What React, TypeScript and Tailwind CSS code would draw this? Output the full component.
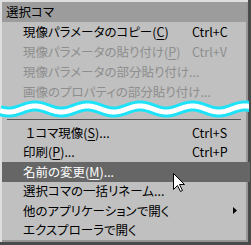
import React from 'react';

const font = { fontFamily: '"Noto Sans CJK JP", "Noto Sans", sans-serif', fontFeatureSettings: '"palt"' };

interface Item {
  label: React.ReactNode;
  shortcut?: string;
  disabled?: boolean;
  active?: boolean;
  submenu?: boolean;
}

const U = ({ c }: { c: string }) => <u className="underline underline-offset-2">{c}</u>;

const topItems: Item[] = [
  { label: <>現像パラメータのコピー(<U c="C" />)</>, shortcut: 'Ctrl+C' },
  { label: <>現像パラメータの貼り付け(<U c="P" />)</>, shortcut: 'Ctrl+V', disabled: true },
  { label: '現像パラメータの部分貼り付け...', disabled: true },
  { label: '画像のプロパティの部分貼り付け...', disabled: true },
];

const bottomItems: Item[] = [
  { label: <>&nbsp;１コマ現像(<U c="S" />)...</>, shortcut: 'Ctrl+S' },
  { label: <>印刷(<U c="P" />)...</>, shortcut: 'Ctrl+P' },
  { label: <>名前の変更(<U c="M" />)...</>, active: true },
  { label: '選択コマの一括リネーム...' },
  { label: '他のアプリケーションで開く', submenu: true },
  { label: 'エクスプローラで開く' },
];

function Row({ item, h }: { item: Item; h: string }) {
  const color = item.active
    ? 'bg-[#666666] text-white -mr-[4px]'
    : item.disabled
      ? 'text-[#8e8e8e]'
      : 'text-black';
  return (
    <div className={`relative flex items-center pl-[21px] text-[12.5px] leading-none ${h} ${color}`}>
      <span className="w-[169px] shrink-0 whitespace-nowrap">{item.label}</span>
      {item.shortcut && <span className="whitespace-nowrap">{item.shortcut}</span>}
      {item.submenu && (
        <svg width="4" height="7" viewBox="0 0 4 7" className="ml-[41px]">
          <path d="M0 0 L4 3.5 L0 7 Z" fill="#000" />
        </svg>
      )}
    </div>
  );
}

function wavePath() {
  const pts: string[] = [];
  for (let x = -2; x <= 251; x++) {
    const y = 11 - 3 * Math.cos((2 * Math.PI * (x - 33)) / 52.5);
    pts.push(`${x},${y.toFixed(2)}`);
  }
  return 'M' + pts.join(' L');
}

export default function App() {
  const d = wavePath();
  return (
    <div className="w-[251px] h-[245px] overflow-hidden bg-[#4a4a4a]" style={font}>
      <div className="relative h-[242px] w-[248px] border-l-2 border-t-2 border-[#dedede] bg-[#c0c0c0]">
        <div className="flex h-full flex-col border-r-2 border-b-2 border-[#969696]">
          <div className="flex h-[20px] items-center bg-[#9c9c9c] pl-[4px] text-[12.5px] leading-none text-black">選択コマ</div>
          {topItems.map((it, i) => (
            <Row key={i} item={it} h="h-[20px]" />
          ))}
          <div className="h-[17px]" />
          <div className="mx-[5px] h-px bg-[#555555]" />
          <div className="h-[3px]" />
          {bottomItems.map((it, i) => (
            <Row key={i} item={it} h="h-[19.5px]" />
          ))}
        </div>

        {/* cut marker */}
        <svg className="absolute left-[-2px] top-[96px]" width="249" height="24" viewBox="-2 0 249 24">
          <path d={d} fill="none" stroke="#1ee3f8" strokeWidth="11" />
          <path d={d} fill="none" stroke="#ffffff" strokeWidth="5" />
        </svg>

        {/* mouse pointer */}
        <svg className="absolute left-[171px] top-[171px]" width="13" height="20" viewBox="0 0 13 20">
          <path
            d="M0.5 0.5 L0.5 16.5 L4.5 12.5 L7.5 18.5 L9.5 17.5 L6.5 11.5 L11.5 11.5 Z"
            fill="#ffffff"
            stroke="#000000"
            strokeWidth="1"
            strokeLinejoin="miter"
          />
        </svg>
      </div>
    </div>
  );
}
